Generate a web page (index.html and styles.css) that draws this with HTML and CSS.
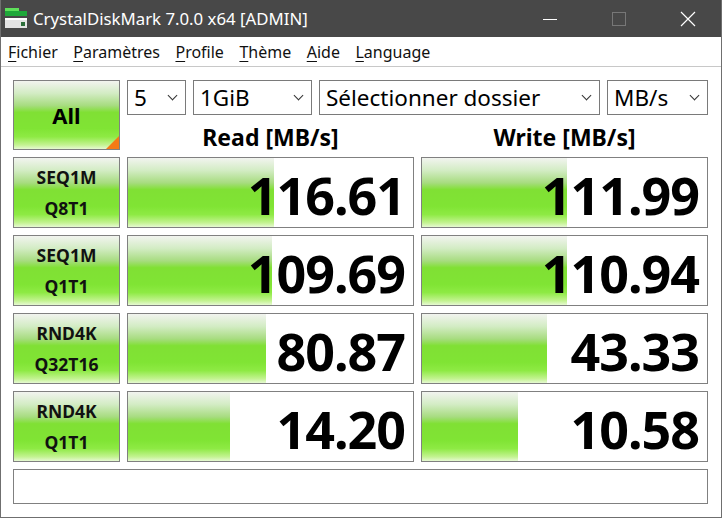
FILE: index.html
```html
<!DOCTYPE html>
<html lang="fr">
<head>
  <meta charset="UTF-8" />
  <title>CrystalDiskMark 7.0.0 x64 [ADMIN]</title>
  <link rel="stylesheet" href="styles.css">
</head>
<body>
  <div class="window">

    <!-- ===== TITLE BAR ===== -->
    <div class="titlebar">
      <svg class="app-icon" width="24" height="22" viewBox="0 0 24 22">
        <rect x="1" y="1" width="14" height="3" fill="#5ee05a"/>
        <rect x="1" y="4" width="22" height="5" fill="#1fa83a"/>
        <rect x="1" y="11" width="22" height="10" fill="#e4e4e4"/>
        <rect x="1" y="11" width="22" height="2" fill="#ffffff"/>
        <rect x="17" y="15" width="4" height="4" fill="#2c6e3a"/>
      </svg>
      <span class="title">CrystalDiskMark 7.0.0 x64 [ADMIN]</span>
      <div class="controls">
        <span class="ctl"><svg width="16" height="16" viewBox="0 0 16 16"><line x1="1" y1="8.5" x2="15" y2="8.5" stroke="#fff" stroke-width="1"/></svg></span>
        <span class="ctl"><svg width="16" height="16" viewBox="0 0 16 16"><rect x="1.5" y="1.5" width="13" height="13" fill="none" stroke="#777" stroke-width="1"/></svg></span>
        <span class="ctl"><svg width="16" height="16" viewBox="0 0 16 16"><path d="M1 1 L15 15 M15 1 L1 15" stroke="#fff" stroke-width="1.2"/></svg></span>
      </div>
    </div>

    <!-- ===== MENU ===== -->
    <ul class="menu">
      <li><u>F</u>ichier</li>
      <li><u>P</u>aramètres</li>
      <li><u>P</u>rofile</li>
      <li><u>T</u>hème</li>
      <li><u>A</u>ide</li>
      <li><u>L</u>anguage</li>
    </ul>

    <!-- ===== MAIN GRID ===== -->
    <div class="main">
      <div class="btn-all green">All<span class="corner"></span></div>

      <div class="combos">
        <div class="combo w-count">5<i class="chev"></i></div>
        <div class="combo w-size">1GiB<i class="chev"></i></div>
        <div class="combo w-dir">Sélectionner dossier<i class="chev"></i></div>
        <div class="combo w-unit">MB/s<i class="chev"></i></div>
      </div>

      <div class="head">Read [MB/s]</div>
      <div class="head">Write [MB/s]</div>

      <div class="label green">SEQ1M<br>Q8T1</div>
      <div class="cell"><div class="bar green" style="width: 51.2%"></div><span>116.61</span></div>
      <div class="cell"><div class="bar green" style="width: 51%"></div><span>111.99</span></div>

      <div class="label green">SEQ1M<br>Q1T1</div>
      <div class="cell"><div class="bar green" style="width: 50.5%"></div><span>109.69</span></div>
      <div class="cell"><div class="bar green" style="width: 50.9%"></div><span>110.94</span></div>

      <div class="label green">RND4K<br>Q32T16</div>
      <div class="cell"><div class="bar green" style="width: 48.4%"></div><span>80.87</span></div>
      <div class="cell"><div class="bar green" style="width: 43.9%"></div><span>43.33</span></div>

      <div class="label green">RND4K<br>Q1T1</div>
      <div class="cell"><div class="bar green" style="width: 35.8%"></div><span>14.20</span></div>
      <div class="cell"><div class="bar green" style="width: 33.7%"></div><span>10.58</span></div>

      <div class="status"></div>
    </div>
  </div>
</body>
</html>
```

FILE: styles.css
```css
body {
  margin: 0;
  padding: 0;
  background: #fff;
  font-family: 'Noto Sans', 'Open Sans', sans-serif;
}

.window {
  width: 722px;
  height: 518px;
  box-sizing: border-box;
  border: 1px solid #6f6f6f;
  border-top: none;
  background: #fff;
  overflow: hidden;
}

/* ===== TITLE BAR ===== */
.titlebar {
  height: 37px;
  background: #484848;
  display: flex;
  align-items: center;
  margin: 0 -1px;
  padding-left: 4px;
  color: #fff;
}

.app-icon {
  margin-top: -2px;
}

.title {
  margin-left: 5px;
  font-size: 16.8px;
}

.controls {
  margin-left: auto;
  display: flex;
  height: 100%;
}

.ctl {
  width: 69px;
  display: flex;
  align-items: center;
  justify-content: center;
}

/* ===== MENU ===== */
.menu {
  list-style: none;
  margin: 0;
  padding: 0 0 0 7px;
  height: 29px;
  display: flex;
  align-items: center;
  gap: 15.5px;
  font-size: 16px;
  color: #111;
  border-bottom: 1px solid #c8c8c8;
}

.menu u {
  text-decoration-thickness: 1px;
  text-underline-offset: 3px;
}

/* ===== MAIN ===== */
.main {
  display: grid;
  grid-template-columns: 107px 287px 287px;
  grid-template-rows: 35px 35px 78px 78px 78px 78px 42px;
  column-gap: 7px;
  padding: 13px 12px 0 12px;
}

.green {
  background: linear-gradient(to bottom,
    #f2f4ef 0%,
    #d3ecc4 18%,
    #a7dc80 36%,
    #80e034 46%,
    #80e434 70%,
    #8eea44 82%,
    #c4f392 94%,
    #e6f9d2 100%);
}

.btn-all {
  grid-row: 1 / 3;
  position: relative;
  border: 1px solid #808080;
  display: flex;
  align-items: center;
  justify-content: center;
  font-weight: bold;
  font-size: 22px;
  color: #000;
}

.corner {
  position: absolute;
  right: 0;
  bottom: 0;
  width: 0;
  height: 0;
  border-left: 13px solid transparent;
  border-bottom: 13px solid #f57a16;
}

.combos {
  grid-column: 2 / 4;
  display: flex;
  gap: 7px;
}

.combo {
  position: relative;
  box-sizing: border-box;
  height: 35px;
  border: 1px solid #7a7a7a;
  background: #fff;
  font-size: 22.5px;
  line-height: 33px;
  padding-left: 6px;
  color: #000;
  white-space: nowrap;
}

.w-count { width: 59px; }
.w-size { width: 119px; }
.w-dir { width: 281px; }
.w-unit { width: 101px; }

.chev {
  position: absolute;
  right: 9px;
  top: 11px;
  width: 6px;
  height: 6px;
  border-right: 1px solid #333;
  border-bottom: 1px solid #333;
  transform: rotate(45deg);
}

.head {
  display: flex;
  align-items: center;
  justify-content: center;
  font-weight: bold;
  font-size: 23px;
  padding-top: 9px;
}

.label {
  margin-top: 7px;
  border: 1px solid #808080;
  display: flex;
  align-items: center;
  justify-content: center;
  text-align: center;
  font-weight: bold;
  font-size: 17.5px;
  line-height: 31px;
  color: #111;
}

.cell {
  margin-top: 7px;
  position: relative;
  border: 1px solid #808080;
  background: #fff;
  display: flex;
  align-items: center;
  justify-content: flex-end;
}

.bar {
  position: absolute;
  left: 0;
  top: 0;
  bottom: 0;
}

.cell span {
  position: relative;
  font-weight: bold;
  font-size: 52px;
  line-height: 56px;
  letter-spacing: -1px;
  padding-right: 8px;
  padding-top: 5px;
  color: #000;
}

.status {
  margin-top: 7px;
  grid-column: 1 / 4;
  border: 1px solid #808080;
  background: #fff;
}
```
